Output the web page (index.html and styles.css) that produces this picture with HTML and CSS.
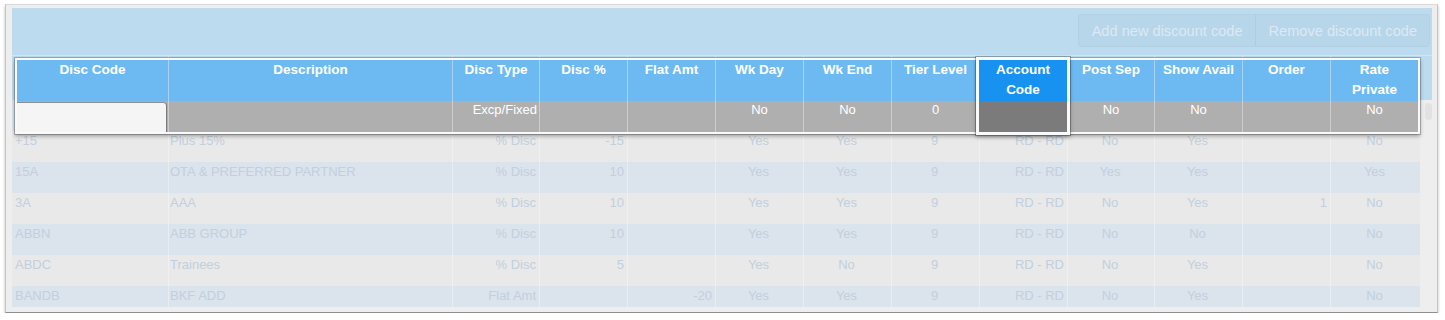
FILE: index.html
```html
<!DOCTYPE html>
<html lang="en">
<head>
    <meta charset="utf-8">
    <title>Discount Codes</title>
    <link rel="stylesheet" href="styles.css">
</head>
<body>
<div class="window">
    <div class="panel">
        <div class="toolbar">
            <div class="btn-group">
                <button type="button" class="btn">Add new discount code</button>
                <button type="button" class="btn">Remove discount code</button>
            </div>
        </div>
        <div class="grid-area">
            <div class="list">
                <div class="row head">
                    <div></div><div></div><div></div><div></div><div></div><div></div><div></div>
                    <div></div><div></div><div></div><div></div><div></div><div></div>
                </div>
                <div class="row even">
                    <div></div><div></div><div></div><div></div><div></div><div></div><div></div>
                    <div></div><div></div><div></div><div></div><div></div><div></div>
                </div>
                <div class="row odd">
                    <div>+15</div><div>Plus 15%</div><div class="r">% Disc</div><div class="r">-15</div><div class="r"></div>
                    <div class="c">Yes</div><div class="c">Yes</div><div class="c">9</div><div class="r">RD - RD</div>
                    <div class="c">No</div><div class="c">Yes</div><div class="r"></div><div class="c">No</div>
                </div>
                <div class="row even">
                    <div>15A</div><div>OTA &amp; PREFERRED PARTNER</div><div class="r">% Disc</div><div class="r">10</div><div class="r"></div>
                    <div class="c">Yes</div><div class="c">Yes</div><div class="c">9</div><div class="r">RD - RD</div>
                    <div class="c">Yes</div><div class="c">Yes</div><div class="r"></div><div class="c">Yes</div>
                </div>
                <div class="row odd">
                    <div>3A</div><div>AAA</div><div class="r">% Disc</div><div class="r">10</div><div class="r"></div>
                    <div class="c">Yes</div><div class="c">Yes</div><div class="c">9</div><div class="r">RD - RD</div>
                    <div class="c">No</div><div class="c">Yes</div><div class="r">1</div><div class="c">No</div>
                </div>
                <div class="row even">
                    <div>ABBN</div><div>ABB GROUP</div><div class="r">% Disc</div><div class="r">10</div><div class="r"></div>
                    <div class="c">Yes</div><div class="c">Yes</div><div class="c">9</div><div class="r">RD - RD</div>
                    <div class="c">No</div><div class="c">No</div><div class="r"></div><div class="c">No</div>
                </div>
                <div class="row odd">
                    <div>ABDC</div><div>Trainees</div><div class="r">% Disc</div><div class="r">5</div><div class="r"></div>
                    <div class="c">Yes</div><div class="c">No</div><div class="c">9</div><div class="r">RD - RD</div>
                    <div class="c">No</div><div class="c">Yes</div><div class="r"></div><div class="c">No</div>
                </div>
                <div class="row even">
                    <div>BANDB</div><div>BKF ADD</div><div class="r">Flat Amt</div><div class="r"></div><div class="r">-20</div>
                    <div class="c">Yes</div><div class="c">Yes</div><div class="c">9</div><div class="r">RD - RD</div>
                    <div class="c">No</div><div class="c">Yes</div><div class="r"></div><div class="c">No</div>
                </div>
            </div>
            <div class="scroll">
                <div class="scroll-head"></div>
                <div class="thumb"></div>
            </div>
        </div>

        <!-- row being edited, floats over the list -->
        <div class="editor">
            <div class="th">Disc Code</div>
            <div class="th">Description</div>
            <div class="th">Disc Type</div>
            <div class="th">Disc %</div>
            <div class="th">Flat Amt</div>
            <div class="th">Wk Day</div>
            <div class="th">Wk End</div>
            <div class="th">Tier Level</div>
            <div class="focus-col">
                <div class="focus-head">Account<br>Code</div>
                <div class="focus-cell"></div>
            </div>
            <div class="th">Post Sep</div>
            <div class="th">Show Avail</div>
            <div class="th">Order</div>
            <div class="th">Rate<br>Private</div>

            <div class="td input-cell"><input type="text" class="code-input"></div>
            <div class="td"></div>
            <div class="td r">Excp/Fixed</div>
            <div class="td"></div>
            <div class="td"></div>
            <div class="td c">No</div>
            <div class="td c">No</div>
            <div class="td c">0</div>
            <div class="td c">No</div>
            <div class="td c">No</div>
            <div class="td"></div>
            <div class="td c">No</div>
        </div>
    </div>
</div>
</body>
</html>
```

FILE: styles.css
```css
body {
    margin: 0;
    background: #fff;
    font-family: "Liberation Sans", Arial, Helvetica, sans-serif;
}

.window {
    margin: 4px 0 0 5px;
    width: 1433px;
    height: 309px;
    box-sizing: border-box;
    padding: 3px 5px 5px 6px;
    background: #eeeeee;
    border: 1px solid #c4c4c4;
    border-top-color: #dadada;
    border-bottom-color: #8e8e8e;
    box-shadow: 0 2px 3px rgba(0, 0, 0, .25);
}

.panel {
    position: relative;
    width: 1420px;
    height: 299px;
    overflow: hidden;
}

/* top bar */
.toolbar {
    height: 47px;
    box-sizing: border-box;
    padding: 6px 2px 0 0;
    background: #bcdbef;
    display: flex;
    justify-content: flex-end;
}
.btn-group {
    display: flex;
    height: 33px;
    border: 1px solid #b2d1e5;
    border-radius: 3px;
    box-sizing: border-box;
    background: #b7d6ea;
}
.btn {
    border: none;
    background: transparent;
    padding: 0 12px 0 13px;
    font-family: inherit;
    font-size: 14.6px;
    color: #dde9f2;
}
.btn + .btn { border-left: 1px solid #aecce0; }

/* list behind the editor */
.grid-area { display: flex; }
.list { flex: 0 0 1408px; }
.row {
    display: grid;
    grid-template-columns: 156px 284px 87px 88px 88px 88px 88px 88px 88px 87px 88px 88px 90px;
    height: 31px;
    font-size: 13px;
    line-height: 16px;
    color: #c2cfde;
}
.row > div {
    padding: 2px 3px 0 1px;
    white-space: nowrap;
    overflow: hidden;
    border-left: 1px solid rgba(255, 255, 255, .35);
}
.row > div:first-child {
    border-left: none;
    padding-left: 3px;
}
.row.head {
    height: 45px;
    background: #bcdbef;
    border-top: 1px solid #d2e5f2;
    box-sizing: border-box;
}
.row.odd { background: #e9e9e9; }
.row.even { background: #dbe3ed; }
.r { text-align: right; }
.c { text-align: center; }

.scroll {
    flex: 1;
    position: relative;
}
.scroll-head {
    height: 45px;
    background: #bcdbef;
    border-top: 1px solid #d2e5f2;
    box-sizing: border-box;
}
.thumb {
    margin: 3px 0 0 5px;
    width: 7px;
    height: 17px;
    border-radius: 4px;
    background: #e2e2e2;
}

/* editor popup */
.editor {
    position: absolute;
    left: 3px;
    top: 50px;
    display: grid;
    grid-template-columns: 151px 284px 87px 88px 88px 88px 88px 88px 88px 87px 88px 88px 88px;
    grid-template-rows: 41px 31px;
    border: 2px solid #fafafa;
    box-shadow: 0 0 0 1px rgba(0, 0, 0, .22), 0 2px 4px rgba(0, 0, 0, .35);
    color: #fff;
}
.th {
    background: #6dbaf3;
    border-left: 1px solid #a9d3f3;
    font-size: 13.5px;
    font-weight: bold;
    line-height: 20px;
    text-align: center;
}
.th:first-child { border-left: none; }
.td {
    background: #afafaf;
    border-left: 1px solid #cdcdcd;
    font-size: 13px;
    line-height: 18px;
    padding: 0 2px;
}
.td.input-cell {
    border-left: none;
    padding: 1px 1px 0 0;
}
.code-input {
    display: block;
    width: 100%;
    height: 100%;
    box-sizing: border-box;
    margin: 0;
    border: none;
    border-top: 1px solid #8e8e8e;
    border-right: 1px solid #7a7a7a;
    border-top-right-radius: 4px;
    background: #f5f5f5;
    outline: none;
}

.focus-col {
    grid-column: 9;
    grid-row: 1 / 3;
    margin: -3px;
    position: relative;
    z-index: 1;
    display: flex;
    flex-direction: column;
    border: 3px solid #fafafa;
    box-shadow: 0 0 0 1px rgba(0, 0, 0, .25), 0 2px 4px rgba(0, 0, 0, .35);
}
.focus-head {
    height: 41px;
    background: #1892f1;
    font-size: 13.5px;
    font-weight: bold;
    line-height: 20px;
    text-align: center;
}
.focus-cell {
    flex: 1;
    background: #7b7b7b;
}
```
